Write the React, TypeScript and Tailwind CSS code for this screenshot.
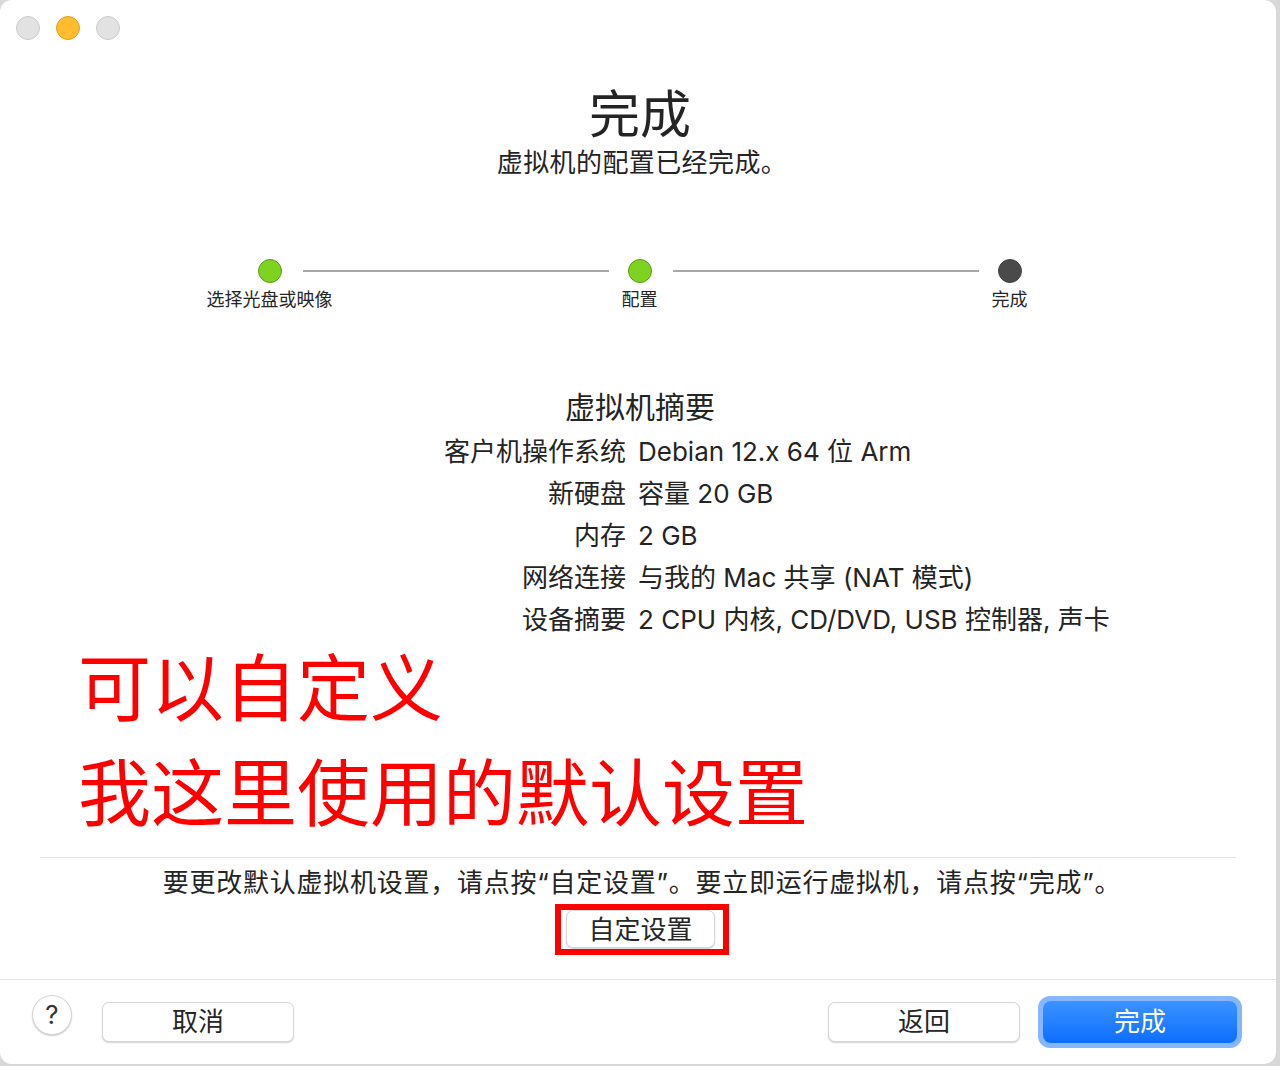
const font = "font-['Inter','Noto_Sans_CJK_SC',sans-serif]"

const summary = [
  ['客户机操作系统', 'Debian 12.x 64 位 Arm'],
  ['新硬盘', '容量 20 GB'],
  ['内存', '2 GB'],
  ['网络连接', '与我的 Mac 共享 (NAT 模式)'],
  ['设备摘要', '2 CPU 内核, CD/DVD, USB 控制器, 声卡'],
]

function Step({ label, done }: { label: string; done: boolean }) {
  return (
    <div className="flex w-6 flex-col items-center">
      <div
        className={`h-6 w-6 rounded-full border ${
          done ? 'border-[#5e9a1c] bg-[#7ed321]' : 'border-[#444] bg-[#4a4a4a]'
        }`}
      />
      <div className="mt-[5px] whitespace-nowrap text-[18px] leading-6 text-[#262626]">{label}</div>
    </div>
  )
}

function MacButton({ children, className = '' }: { children: React.ReactNode; className?: string }) {
  return (
    <button
      className={`flex items-center justify-center rounded-[7px] border border-[#d6d6d6] bg-white text-[26px] text-[#262626] shadow-[0_1px_1.5px_rgba(0,0,0,0.18)] ${className}`}
    >
      {children}
    </button>
  )
}

export default function App() {
  return (
    <div className={`h-[1066px] w-[1280px] bg-[#d8d8d8] ${font}`}>
      <div className="flex h-[1064px] w-[1276px] flex-col overflow-hidden rounded-[12px] bg-white text-[#242424]">
        {/* title bar */}
        <div className="flex gap-4 pl-4 pt-4">
          <div className="h-6 w-6 rounded-full border border-[#cbcbcb] bg-[#e2e2e2]" />
          <div className="h-6 w-6 rounded-full border border-[#dda024] bg-[#febc2e]" />
          <div className="h-6 w-6 rounded-full border border-[#cbcbcb] bg-[#e2e2e2]" />
        </div>

        <h1 className="mt-[45px] pl-1 text-center text-[51px] leading-[60px]">完成</h1>
        <p className="mt-px pl-2 text-center text-[26px] leading-[34px] tracking-[0.4px]">虚拟机的配置已经完成。</p>

        {/* steps */}
        <div className="mt-[79px] flex justify-center pl-[3px]">
          <Step label="选择光盘或映像" done />
          <div className="ml-[21px] mr-[19px] mt-[11px] h-[2px] w-[306px] self-start bg-[#a8a8a8]" />
          <Step label="配置" done />
          <div className="ml-[21px] mr-[19px] mt-[11px] h-[2px] w-[306px] self-start bg-[#a8a8a8]" />
          <Step label="完成" done={false} />
        </div>

        {/* summary */}
        <h2 className="mt-[75px] pl-1 text-center text-[30px] leading-10">虚拟机摘要</h2>
        <div className="mt-[3px]">
          {summary.map(([k, v]) => (
            <div key={k} className="flex h-[42px] items-center text-[26px]">
              <div className="w-[626px] text-right">{k}</div>
              <div className="ml-3 whitespace-nowrap">{v}</div>
            </div>
          ))}
        </div>

        {/* annotation */}
        <div className="mt-[-4px] pl-[78px] text-[73px] leading-[105px] text-[#ff0000]">
          <div>可以自定义</div>
          <div>我这里使用的默认设置</div>
        </div>

        <div className="mx-10 mt-[11px] h-px bg-[#e2e2e2]" />
        <p className="mt-2 pl-2 text-center text-[26px] leading-[34px] tracking-[0.75px]">
          要更改默认虚拟机设置，请点按“自定设置”。要立即运行虚拟机，请点按“完成”。
        </p>
        <div className="mt-1 flex justify-center pl-[8px]">
          <div className="border-[6px] border-[#ff0000] pb-px pl-[5px] pr-2">
            <MacButton className="h-[38px] w-[149px]">自定设置</MacButton>
          </div>
        </div>

        {/* footer */}
        <div className="mt-6 h-px bg-[#e4e4e4]" />
        <div className="flex h-[83px] items-center pl-8">
          <div className="mb-[14px] flex h-10 w-10 items-center justify-center rounded-full border border-[#d4d4d4] bg-white text-[26px] text-[#333] shadow-[0_1px_1.5px_rgba(0,0,0,0.2)]">
            ?
          </div>
          <MacButton className="ml-[30px] h-10 w-[192px]">取消</MacButton>
          <MacButton className="ml-auto h-10 w-[192px]">返回</MacButton>
          <div className="ml-[18px] mr-[34px] rounded-[12px] bg-[#86b6ff] p-[5px]">
            <button className="flex h-[42px] w-[194px] items-center justify-center rounded-[8px] bg-gradient-to-b from-[#3a93ff] to-[#0b6dff] text-[26px] text-white">
              完成
            </button>
          </div>
        </div>
      </div>
    </div>
  )
}
